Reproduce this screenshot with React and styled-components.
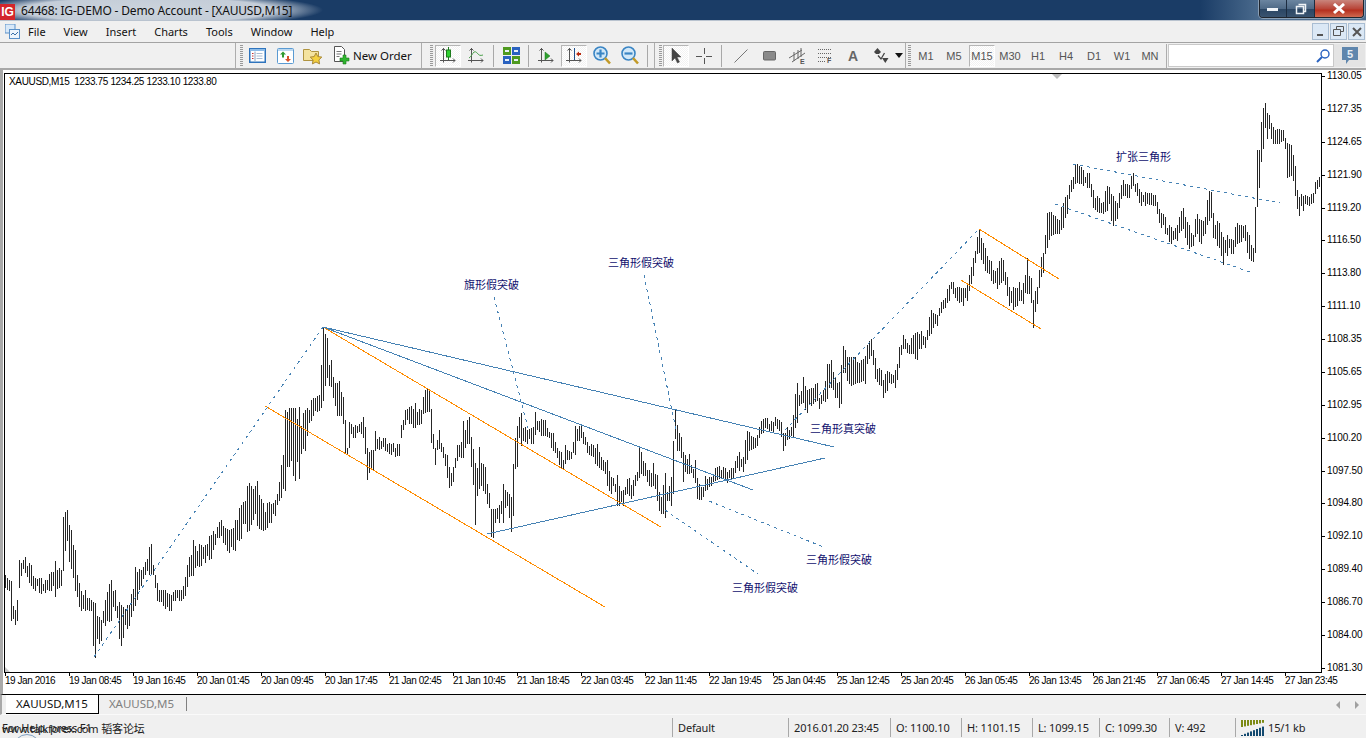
import React from "react";
import styled, { createGlobalStyle } from "styled-components";

// price bars read off the chart: x, high y, low y (page pixels)
const BAR_POINTS = [
  5,575,587, 8,580,590, 10,581,620, 12,606,618, 14,610,624, 17,600,620, 19,560,587, 21,563,575, 25,557,572, 30,565,585,
  33,576,588, 40,578,593, 45,580,592, 50,572,590, 55,561,596, 60,570,585, 63,517,570, 66,510,540, 70,530,568, 75,550,590,
  80,591,610, 85,590,610, 90,600,610, 94,603,657, 100,620,640, 105,600,625, 110,580,620, 115,590,610, 120,605,645, 128,605,625,
  135,567,605, 140,570,585, 150,544,573, 157,583,600, 165,590,608, 170,595,610, 175,590,600, 180,590,600, 185,577,595, 193,540,575,
  200,545,565, 210,535,558, 220,520,535, 228,530,552, 235,520,550, 240,505,538, 248,483,530, 257,481,525, 262,503,530, 267,503,527,
  275,500,515, 281,465,497, 285,410,490, 290,408,460, 294,408,480, 299,407,478, 305,410,450, 312,398,415, 318,395,410, 323,327,400,
  326,338,377, 329,365,385, 331,360,386, 333,377,397, 337,383,415, 339,381,415, 343,397,423, 345,420,453, 347,448,453, 349,422,447,
  351,424,433, 355,425,437, 359,424,431, 363,417,437, 365,427,453, 367,448,479, 369,452,472, 373,450,469, 375,431,450, 379,437,449,
  385,438,450, 390,444,454, 398,444,455, 400,425,437, 405,410,424, 410,406,423, 415,403,427, 420,410,423, 425,390,412, 428,389,411,
  431,409,442, 435,448,464, 439,430,448, 443,447,457, 447,455,477, 449,467,487, 453,467,481, 457,445,460, 461,442,457, 463,421,457,
  469,417,443, 471,437,466, 475,463,524, 479,447,488, 483,464,490, 485,467,493, 489,493,507, 491,509,536, 493,509,537, 495,509,522,
  499,505,522, 503,484,522, 507,492,505, 511,497,531, 513,464,515, 515,438,468, 517,426,466, 519,417,437, 521,413,445, 527,430,443,
  532,427,443, 535,412,434, 542,420,435, 545,420,435, 548,432,437, 552,433,450, 557,448,457, 560,452,468, 563,460,468, 565,445,463,
  570,452,458, 575,426,454, 580,426,437, 583,432,443, 587,442,452, 592,445,456, 597,444,465, 602,460,470, 607,460,485, 610,477,493,
  613,478,485, 617,475,505, 619,486,505, 623,490,505, 629,478,495, 633,480,495, 636,472,480, 639,447,477, 645,463,475, 649,470,485,
  651,473,486, 653,463,485, 657,475,500, 659,492,510, 661,497,513, 665,473,517, 667,492,500, 671,477,505, 673,441,493, 675,409,438,
  677,425,450, 679,433,450, 681,437,457, 683,452,481, 685,455,471, 689,454,473, 691,465,472, 695,460,482, 697,478,498, 700,487,499,
  705,476,490, 710,477,485, 715,468,480, 718,466,478, 725,468,480, 732,468,478, 735,461,472, 739,452,470, 743,457,471, 746,431,459,
  748,432,450, 752,437,448, 757,435,445, 758,427,437, 762,419,432, 767,418,428, 772,422,431, 775,417,425, 778,420,430, 782,423,438,
  783,433,450, 787,427,439, 791,427,435, 793,415,436, 796,383,422, 799,395,405, 803,377,402, 806,390,412, 812,388,403, 816,383,400,
  819,398,408, 823,390,400, 827,364,398, 831,360,387, 835,378,397, 839,382,407, 841,365,403, 843,346,372, 847,357,380, 850,357,385,
  854,357,383, 858,363,382, 862,359,380, 865,356,383, 867,345,363, 870,339,355, 875,358,378, 880,370,385, 883,380,397, 886,371,390,
  892,375,382, 895,370,387, 899,347,367, 903,335,348, 908,345,353, 912,335,353, 916,332,359, 921,331,348, 925,337,347, 927,330,339,
  930,310,333, 933,313,327, 937,315,325, 941,302,312, 945,298,307, 948,285,300, 951,282,288, 953,282,293, 955,288,297, 958,287,302,
  963,288,305, 967,283,300, 969,275,290, 971,267,283, 973,258,275, 977,237,253, 979,229,252, 982,243,263, 985,248,270, 988,260,273,
  991,261,280, 993,270,283, 997,268,288, 1000,258,282, 1003,260,280, 1007,277,295, 1009,287,305, 1013,287,309, 1016,288,305, 1019,282,300,
  1023,283,303, 1027,258,293, 1031,278,302, 1033,300,327, 1036,287,303, 1038,270,287, 1042,253,272, 1045,235,253, 1047,213,247, 1050,212,235,
  1054,216,233, 1058,220,233, 1062,203,227, 1066,195,213, 1069,185,198, 1072,177,188, 1074,164,183, 1077,164,182, 1080,167,183, 1083,170,185,
  1087,173,187, 1089,173,187, 1093,190,207, 1098,198,212, 1103,202,213, 1106,186,210, 1108,187,203, 1112,196,225, 1116,203,218, 1118,193,207,
  1123,180,195, 1128,185,197, 1132,173,185, 1137,183,195, 1140,192,205, 1145,192,205, 1150,193,204, 1154,195,205, 1157,202,213, 1160,213,227,
  1165,217,233, 1170,227,243, 1177,225,240, 1182,208,228, 1185,217,237, 1188,225,248, 1192,235,245, 1196,214,233, 1200,220,243, 1205,217,233,
  1208,191,220, 1210,192,217, 1213,213,237, 1218,223,247, 1223,237,264, 1227,235,255, 1232,240,253, 1236,223,243, 1240,225,241, 1245,225,240,
  1248,235,258, 1252,248,261, 1254,237,253, 1255,207,252, 1257,150,206, 1259,150,187, 1262,108,148, 1264,103,127, 1267,113,138, 1269,115,128,
  1272,127,143, 1274,130,143, 1278,129,143, 1282,130,140, 1285,138,148, 1287,143,177, 1290,145,175, 1293,155,180, 1296,172,202, 1297,190,208,
  1299,197,215, 1303,196,210, 1305,195,203, 1308,197,205, 1312,193,202, 1315,182,193, 1317,180,188, 1320,175,185,
];

// small seeded generator so the bars come out the same each time
const makeBarsPath = () => {
  let seed = 4711;
  const rnd = () => {
    seed = (seed * 16807) % 2147483647;
    return seed / 2147483647;
  };
  let d = "";
  let k = 0;
  for (let x = 5; x <= 1320; x += 2) {
    while (BAR_POINTS[(k + 1) * 3] !== undefined && BAR_POINTS[(k + 1) * 3] <= x) k++;
    const x0 = BAR_POINTS[k * 3];
    const x1 = BAR_POINTS[(k + 1) * 3] ?? x0 + 1;
    const t = (x - x0) / (x1 - x0);
    let hi = BAR_POINTS[k * 3 + 1] + (BAR_POINTS[k * 3 + 4] - BAR_POINTS[k * 3 + 1] || 0) * t;
    let lo = BAR_POINTS[k * 3 + 2] + (BAR_POINTS[k * 3 + 5] - BAR_POINTS[k * 3 + 2] || 0) * t;
    if (x - x0 <= 1) {
      // a bar next to a read-off point takes that point as it is
      hi = BAR_POINTS[k * 3 + 1];
      lo = BAR_POINTS[k * 3 + 2];
    } else if (x1 - x > 1) {
      // the ones between get shorter and uneven, as real ones are
      const range = lo - hi;
      const shift = (rnd() - 0.5) * Math.min(range, 14) * 0.5;
      hi += rnd() * 0.32 * range + shift;
      lo += -rnd() * 0.32 * range + shift;
    }
    d += `M${x + 0.5} ${Math.round(hi)}V${Math.round(lo + 1)}`;
  }
  return d;
};

const BARS_PATH = makeBarsPath();

const PRICES = [
  "1130.05", "1127.35", "1124.65", "1121.90", "1119.20", "1116.50", "1113.80", "1111.10", "1108.35", "1105.65",
  "1102.95", "1100.20", "1097.50", "1094.80", "1092.10", "1089.40", "1086.70", "1084.00", "1081.30",
];

const TIMES = [
  "19 Jan 2016", "19 Jan 08:45", "19 Jan 16:45", "20 Jan 01:45", "20 Jan 09:45", "20 Jan 17:45", "21 Jan 02:45",
  "21 Jan 10:45", "21 Jan 18:45", "22 Jan 03:45", "22 Jan 11:45", "22 Jan 19:45", "25 Jan 04:45", "25 Jan 12:45",
  "25 Jan 20:45", "26 Jan 05:45", "26 Jan 13:45", "26 Jan 21:45", "27 Jan 06:45", "27 Jan 14:45", "27 Jan 23:45",
];

const SOLID_BLUE = [
  [323, 327, 834, 447],
  [323, 327, 753, 490],
  [487, 534, 825, 458],
];
const ORANGE = [
  [323, 327, 661, 527],
  [265, 406, 605, 607],
  [979, 229, 1059, 279],
  [961, 280, 1041, 329],
];
const DASHED = [
  [94, 657, 323, 327],
  [785, 430, 979, 229],
  [494, 297, 528, 428],
  [644, 275, 676, 430],
  [709, 501, 826, 548],
  [665, 510, 758, 574],
  [1073, 164, 1280, 203],
  [1055, 204, 1250, 272],
];
const NOTES = [
  { x: 464, y: 289, text: "旗形假突破" },
  { x: 608, y: 267, text: "三角形假突破" },
  { x: 810, y: 433, text: "三角形真突破" },
  { x: 806, y: 564, text: "三角形假突破" },
  { x: 732, y: 592, text: "三角形假突破" },
  { x: 1116, y: 161, text: "扩张三角形" },
];

const GlobalStyle = createGlobalStyle`
  html, body {
    margin: 0;
    padding: 0;
    background: #f0f0f0;
    overflow: hidden;
  }
`;

const Page = styled.div`
  width: 1366px;
  height: 738px;
  display: flex;
  flex-direction: column;
  overflow: hidden;
  font-family: "Noto Sans", "Noto Sans CJK SC", sans-serif;
  color: #000;
`;

const TitleBar = styled.div`
  flex: 0 0 21px;
  min-height: 0;
  box-sizing: border-box;
  display: flex;
  align-items: flex-start;
  border-bottom: 1px solid #b9c3cf;
  background:
    radial-gradient(ellipse 175px 17px at 148px 10px, #ccd4dd 0, #c4cdd8 72%, rgba(196, 205, 216, 0) 100%),
    linear-gradient(90deg, rgba(26, 60, 102, 0) 1200px, #4d6d8f 1262px),
    #1a3c66;
`;

const AppLogo = styled.div`
  width: 15px;
  height: 16px;
  margin-top: 4px;
  background: #d3262c;
  color: #fff;
  font: bold 12px/16px "Liberation Sans", sans-serif;
  text-align: center;
`;

const TitleText = styled.div`
  margin-left: 6px;
  height: 20px;
  font-size: 12px;
  line-height: 22px;
  letter-spacing: -0.17px;
  color: #111;
  white-space: nowrap;
`;

const CaptionButtons = styled.div`
  margin-left: auto;
  margin-right: 2px;
  display: flex;
  height: 17px;
  border: 1px solid #20262e;
  border-top: 0;
  border-radius: 0 0 4px 4px;
  box-shadow: 0 0 0 1px rgba(255, 255, 255, 0.35);
  overflow: hidden;
`;

const CaptionButton = styled.div`
  width: ${(p) => p.$w}px;
  display: flex;
  align-items: center;
  justify-content: center;
  border-left: ${(p) => (p.$first ? "0" : "1px solid #1c2c40")};
  background: ${(p) =>
    p.$close
      ? "linear-gradient(#c9857c 0, #b9473a 50%, #b5301f 60%, #cf6a50 100%)"
      : "linear-gradient(#6b85a0 0, #4f6a87 50%, #2b4664 55%, #39536f 100%)"};
`;

const MenuBar = styled.div`
  flex: 0 0 22px;
  box-sizing: border-box;
  display: flex;
  align-items: center;
  background: #f0f0f0;
  border-bottom: 1px solid #a3a3a3;
  padding-left: 5px;
`;

const MenuItem = styled.div`
  font-size: 11px;
  margin-left: ${(p) => p.$gap}px;
  color: #111;
`;

const MdiButtons = styled.div`
  margin-left: auto;
  margin-right: 1px;
  display: flex;
  gap: 1px;
`;

const MdiButton = styled.div`
  width: 17px;
  height: 17px;
  box-sizing: border-box;
  border: 1px solid #a9bdd2;
  background: #dbe8f5;
  display: flex;
  align-items: center;
  justify-content: center;
`;

const ToolRow = styled.div`
  flex: 0 0 27px;
  box-sizing: border-box;
  display: flex;
  background: #f0f0f0;
  border-bottom: 2px solid #a8a8a8;
  padding-left: 235px;
`;

const ToolGroup = styled.div`
  display: flex;
  align-items: center;
  width: ${(p) => p.$w}px;
  box-sizing: border-box;
  border-left: 1px solid #adadad;
  padding-left: ${(p) => p.$pad}px;
`;

const Grip = styled.div`
  width: 3px;
  height: 21px;
  margin-right: ${(p) => p.$after}px;
  background: repeating-linear-gradient(#9a9a9a 0 1px, #f0f0f0 1px 2px);
`;

const ToolButton = styled.div`
  flex: 0 0 ${(p) => p.$w || 28}px;
  height: 22px;
  box-sizing: border-box;
  display: flex;
  align-items: center;
  justify-content: center;
  font: 11px "Liberation Sans", sans-serif;
  color: #555;
  ${(p) =>
    p.$active &&
    `
    margin: 0 1px;
    flex-basis: ${(p.$w || 28) - 2}px;
    background: repeating-conic-gradient(#fff 0 25%, #f2f2f2 0 50%) 0 0 / 2px 2px;
    border: 1px solid #fff;
    border-top-color: #b5b5b5;
    border-left-color: #b5b5b5;
  `}
`;

const OrderButton = styled(ToolButton)`
  justify-content: flex-start;
  gap: 3px;
  padding-left: 6px;
  font: 11.5px "Noto Sans", sans-serif;
  color: #111;
`;

const TextTool = styled(ToolButton)`
  font-size: 14px;
  font-weight: bold;
  color: #666;
`;

const ToolSep = styled.div`
  width: 1px;
  height: 22px;
  margin: 0 ${(p) => p.$r ?? 3}px 0 3px;
  background: #a8a8a8;
`;

const GroupEnd = styled.div`
  width: 1px;
  height: 24px;
  align-self: center;
  background: #adadad;
`;

const SearchBox = styled.div`
  width: 166px;
  height: 23px;
  margin-left: 1px;
  align-self: center;
  box-sizing: border-box;
  background: #fff;
  border: 1px solid #c9c9c9;
  display: flex;
  align-items: center;
  justify-content: flex-end;
  padding-right: 3px;
`;

const MailButton = styled.div`
  width: 31px;
  height: 23px;
  align-self: center;
  background: #e4e4e4;
  display: flex;
  align-items: center;
  justify-content: center;
`;

const ChartWindow = styled.div`
  flex: 0 0 625px;
  box-sizing: border-box;
  background: #fff;
  border-left: 3px solid #a9a9a9;
  border-bottom: 1px solid #000;
`;

const ChartBody = styled.div`
  display: flex;
  height: 603px;
`;

const PlotFrame = styled.div`
  position: relative;
  width: 1318px;
  height: 600px;
  box-sizing: border-box;
  margin: 3px 0 0 1px;
  border: 1px solid #000;
  flex: none;
`;

const PlotSvg = styled.svg`
  display: block;
  width: 1316px;
  height: 598px;
`;

const SymbolLine = styled.div`
  position: absolute;
  left: 4px;
  top: 1px;
  font: 10px/13px "Liberation Sans", sans-serif;
  letter-spacing: -0.35px;
  white-space: pre;
`;

const ShiftMark = styled.div`
  position: absolute;
  left: 1047px;
  top: 0;
  width: 0;
  height: 0;
  border: 5px solid transparent;
  border-top: 5px solid #bcbcbc;
`;

const CornerMark = styled.div`
  position: absolute;
  left: 0;
  bottom: 0;
  width: 0;
  height: 0;
  border-left: 5px solid #c8c8c8;
  border-top: 5px solid transparent;
`;

const PriceAxis = styled.div`
  display: flex;
  flex-direction: column;
  justify-content: space-between;
  height: 604px;
  width: 44px;
`;

const PriceLabel = styled.div`
  position: relative;
  height: 12px;
  padding-left: 5px;
  font: 10px/12px "Liberation Sans", sans-serif;
  letter-spacing: -0.1px;
  &::before {
    content: "";
    position: absolute;
    left: 0;
    top: 6px;
    width: 3px;
    height: 1px;
    background: #000;
  }
`;

const TimeAxis = styled.div`
  display: grid;
  grid-template-columns: repeat(21, 64px);
  padding-left: 2px;
  height: 21px;
`;

const TimeLabel = styled.div`
  position: relative;
  padding-top: 2px;
  font: 10px/12px "Liberation Sans", sans-serif;
  letter-spacing: -0.45px;
  white-space: nowrap;
  &::before {
    content: "";
    position: absolute;
    left: 0;
    top: 0;
    width: 1px;
    height: 3px;
    background: #000;
  }
`;

const TabBar = styled.div`
  flex: 0 0 20px;
  box-sizing: border-box;
  display: flex;
  align-items: stretch;
  background: #f0f0f0;
  padding-left: 6px;
  border-left: 2px solid #a9a9a9;
  border-bottom: 1px solid #fafafa;
`;

const Tab = styled.div`
  font-size: 11.5px;
  line-height: 18px;
  height: 19px;
  box-sizing: border-box;
  text-align: center;
  width: ${(p) => p.$w}px;
  margin-left: -2px;
  color: ${(p) => (p.$active ? "#111" : "#808080")};
  background: ${(p) => (p.$active ? "#fff" : "transparent")};
  border-right: ${(p) => (p.$active ? "1px solid #000" : "0")};
  border-bottom: ${(p) => (p.$active ? "1px solid #000" : "0")};
`;

const TabSep = styled.div`
  width: 1px;
  height: 14px;
  margin-top: 2px;
  background: #808080;
`;

const TabArrows = styled.div`
  margin-left: auto;
  margin-right: 7px;
  display: flex;
  align-items: center;
  gap: 15px;
`;

const StatusBar = styled.div`
  position: relative;
  flex: 1;
  display: flex;
  align-items: center;
  box-sizing: border-box;
  padding-top: 2px;
  background: #f0f0f0;
  font-size: 11px;
  letter-spacing: -0.15px;
  color: #222;
`;

const HelpText = styled.div`
  flex: 0 0 672px;
  position: relative;
  height: 100%;
  overflow: hidden;
`;

const HelpLine = styled.span`
  position: absolute;
  left: 2px;
  top: 3px;
  white-space: nowrap;
`;

const WatermarkArc = styled.div`
  position: absolute;
  left: 13px;
  top: 17px;
  width: 28px;
  height: 28px;
  box-sizing: border-box;
  border: 1px solid #7f9fc0;
  border-radius: 50%;
`;

const StatusCell = styled.div`
  flex: 0 0 ${(p) => p.$w}px;
  box-sizing: border-box;
  height: 19px;
  line-height: 19px;
  border-left: 1px solid #a8a8a8;
  padding-left: ${(p) => p.$pad || 5}px;
  white-space: nowrap;
  display: flex;
  align-items: center;
  gap: 3px;
`;

// axes shared by the chart-type toolbar icons
const Axes = () => (
  <path d="M5.5 2V16.5M2 14.5H17M3.5 4.5l2-2 2 2M15 12.5l2 2-2 2" fill="none" stroke="#555" />
);

const Icon = ({ w = 20, h = 20, children }) => (
  <svg width={w} height={h} viewBox={`0 0 ${w} ${h}`} shapeRendering="geometricPrecision">
    {children}
  </svg>
);

const ListIcon = () => (
  <Icon w={17} h={15}>
    <rect x=".75" y=".75" width="15.5" height="13.5" fill="#fff" stroke="#2f74bd" strokeWidth="1.5" />
    <rect x="1" y="1" width="15" height="2" fill="#8dbce8" />
    <path d="M3 5.5h1.5M3 8h1.5M3 10.5h1.5" stroke="#c03030" />
    <path d="M6 3.5V13" stroke="#8aa5c2" />
    <path d="M7.5 5.5h6M7.5 8h6M7.5 10.5h6" stroke="#a8bcd2" />
  </Icon>
);

const UpDownIcon = () => (
  <Icon w={17} h={16}>
    <rect x=".5" y=".5" width="16" height="15" rx="1" fill="#fff" stroke="#5a9ad2" />
    <rect x="1" y="1" width="15" height="2" fill="#bcd8f0" />
    <path d="M6 3.5l3 3H7v3H5v-3H3z" fill="#2f9a2f" />
    <path d="M11 14l3-3h-2V8h-2v3H8z" fill="#d8522a" />
  </Icon>
);

const FolderIcon = () => (
  <Icon w={20} h={18}>
    <path d="M.5 2.5h6l2 2h7v9H.5z" fill="#f4e3a0" stroke="#b09440" />
    <path d="M13 6l1.8 3.6 4 .5-2.9 2.8.7 4-3.6-1.9-3.6 1.9.7-4L7.2 10.1l4-.5z" fill="#f4d03f" stroke="#a8883a" />
  </Icon>
);

const OrderIcon = () => (
  <Icon w={17} h={19}>
    <path d="M1.5.5h7l3 3v12h-10z" fill="#fff" stroke="#555" />
    <path d="M3.5 5.5h5M3.5 8h5M3.5 10.5h3" stroke="#777" />
    <path d="M9 7h3v3h3v3h-3v3H9v-3H6v-3h3z" fill="#2fb52f" stroke="#1c7a1c" strokeWidth=".6" transform="translate(1 2)" />
  </Icon>
);

const CandleIcon = () => (
  <Icon>
    <Axes />
    <path d="M10.5 1V4M10.5 11V14" stroke="#1c7a1c" />
    <rect x="8.5" y="4" width="4" height="7" fill="#2fd02f" stroke="#1c7a1c" />
  </Icon>
);

const CurveIcon = () => (
  <Icon>
    <Axes />
    <path d="M3 12c2-1 3-4 5-6 2-1 3 1 4 2s2 2 5 1" fill="none" stroke="#4aa04a" />
  </Icon>
);

const TilesIcon = () => (
  <Icon w={17} h={17}>
    <rect x="0" y="0" width="8" height="8" fill="#4f9a20" />
    <rect x="9" y="0" width="8" height="8" fill="#2a62c0" />
    <rect x="0" y="9" width="8" height="8" fill="#2a62c0" />
    <rect x="9" y="9" width="8" height="8" fill="#4f9a20" />
    <path d="M2 3h4v2H2zM11 3h4v2h-4zM2 12h4v2H2zM11 12h4v2h-4z" fill="#e8f0f8" />
  </Icon>
);

const AutoScrollIcon = () => (
  <Icon>
    <Axes />
    <path d="M9 6l5 4-5 4z" fill="#2fa02f" stroke="#1c7a1c" strokeWidth=".5" />
  </Icon>
);

const ShiftIcon = () => (
  <Icon>
    <Axes />
    <path d="M10.5 2V14" stroke="#1f4f8c" />
    <path d="M12 8l3-2.5V7h2v2h-2v1.5z" fill="#b82a10" />
  </Icon>
);

const ZoomIcon = ({ plus }) => (
  <Icon w={18} h={19}>
    <circle cx="7.5" cy="7.5" r="6.5" fill="#d2e8f8" stroke="#3a85c4" strokeWidth="1.6" />
    <path d="M12 12l5 5.5" stroke="#c29a28" strokeWidth="2.6" />
    <path d={plus ? "M3.5 7.5h8M7.5 3.5v8" : "M3.5 7.5h8"} stroke="#3a85c4" strokeWidth="2.2" />
  </Icon>
);

const ArrowIcon = () => (
  <Icon w={12} h={17}>
    <path d="M2 1v13l3-3 2.5 5 2-1-2.5-5h4z" fill="#444" stroke="#444" strokeWidth=".5" />
  </Icon>
);

const CrossIcon = () => (
  <Icon w={16} h={16}>
    <path d="M0 8.5h6M10 8.5h6M8.5 0v6M8.5 10v6" stroke="#555" />
  </Icon>
);

const SlashIcon = () => (
  <Icon w={14} h={14}>
    <path d="M.5 13.5l13-13" stroke="#777" />
  </Icon>
);

const RectIcon = () => (
  <Icon w={13} h={10}>
    <rect x=".5" y=".5" width="12" height="8.5" rx="1" fill="#8a8a8a" stroke="#666" />
  </Icon>
);

const ChannelIcon = () => (
  <Icon w={17} h={17}>
    <path d="M0 11l13-8M3 15l13-9M5 14V5M9 12V3M12 10V1" stroke="#666" fill="none" />
    <text x="11" y="16.5" fontSize="7" fontWeight="bold" fontFamily="Liberation Sans" fill="#555">E</text>
  </Icon>
);

const FiboIcon = () => (
  <Icon w={15} h={15}>
    <path d="M0 1.5h13M0 5.5h13M0 9.5h13M0 13.5h8" stroke="#666" strokeDasharray="1 1" />
    <text x="9" y="15" fontSize="7" fontWeight="bold" fontFamily="Liberation Sans" fill="#555">F</text>
  </Icon>
);

const DrawArrowsIcon = () => (
  <Icon w={15} h={16}>
    <path d="M0 4l3.5-4L7 4l-2 2H2zM8 10h6.5l-3.2 5z" fill="#444" />
    <path d="M4 7.5l3 3.5 3.5-6" fill="none" stroke="#444" strokeWidth="1.3" />
  </Icon>
);

const MagnifierIcon = () => (
  <Icon w={14} h={14}>
    <circle cx="9" cy="5" r="4" fill="#fff" stroke="#2a62c0" strokeWidth="1.4" />
    <path d="M6 8l-5 5" stroke="#2a62c0" strokeWidth="2" />
  </Icon>
);

const MailIcon = () => (
  <Icon w={18} h={18}>
    <path d="M1 0h16v13H8l-3 4v-4H1z" fill="#5f86ad" />
    <text x="6" y="11" fontSize="11" fontWeight="bold" fontFamily="Liberation Sans" fill="#e8eef4">5</text>
  </Icon>
);

const NetBarsIcon = () => (
  <Icon w={24} h={16}>
    {Array.from({ length: 8 }, (_, i) => (
      <g key={i}>
        <rect x={i * 3} y={0} width="2" height={7 - i * 0.6} fill="#7c8a14" />
        <rect x={i * 3} y={15 - i * 1.2} width="2" height={1 + i * 1.2} fill="#134a70" />
      </g>
    ))}
  </Icon>
);

const ChartIconSmall = () => (
  <Icon w={15} h={15}>
    <rect x="0" y="0" width="10" height="9" fill="#d8e8f8" stroke="#5a90c8" />
    <rect x="4.5" y="5.5" width="10" height="9" fill="#eef5fc" stroke="#5a90c8" />
    <path d="M6 11l2-2 2 2 3-3" fill="none" stroke="#3a70a8" />
  </Icon>
);

const App = () => {
  return (
    <Page>
      <GlobalStyle />
      <TitleBar>
        <AppLogo>IG</AppLogo>
        <TitleText>64468: IG-DEMO - Demo Account - [XAUUSD,M15]</TitleText>
        <CaptionButtons>
          <CaptionButton $w={26} $first>
            <svg width="12" height="4"><rect width="11" height="3" y="1" fill="#f0f4f8" /></svg>
          </CaptionButton>
          <CaptionButton $w={27}>
            <svg width="12" height="12"><path d="M3.5 1.5h7v7h-2M1.5 3.5h7v7h-7z" fill="none" stroke="#eef2f6" strokeWidth="1.5" /></svg>
          </CaptionButton>
          <CaptionButton $w={48} $close>
            <svg width="14" height="12"><path d="M2 1l10 9M12 1L2 10" stroke="#fff" strokeWidth="3" /></svg>
          </CaptionButton>
        </CaptionButtons>
      </TitleBar>

      <MenuBar>
        <ChartIconSmall />
        <MenuItem $gap={8}>File</MenuItem>
        <MenuItem $gap={18}>View</MenuItem>
        <MenuItem $gap={18}>Insert</MenuItem>
        <MenuItem $gap={18}>Charts</MenuItem>
        <MenuItem $gap={18}>Tools</MenuItem>
        <MenuItem $gap={18}>Window</MenuItem>
        <MenuItem $gap={18}>Help</MenuItem>
        <MdiButtons>
          <MdiButton>
            <svg width="9" height="9"><path d="M1 8h6" stroke="#555" strokeWidth="2" /></svg>
          </MdiButton>
          <MdiButton>
            <svg width="11" height="11"><path d="M3.5 3V.5h7v5H8M.5 3.5h7v6h-7z" fill="none" stroke="#555" /></svg>
          </MdiButton>
          <MdiButton>
            <svg width="10" height="10"><path d="M1 1l8 8M9 1l-8 8" stroke="#555" strokeWidth="2" /></svg>
          </MdiButton>
        </MdiButtons>
      </MenuBar>

      <ToolRow>
        <ToolGroup $w={186} $pad={4}>
          <Grip $after={0} />
          <ToolButton><ListIcon /></ToolButton>
          <ToolButton><UpDownIcon /></ToolButton>
          <ToolButton><FolderIcon /></ToolButton>
          <OrderButton $w={92}><OrderIcon />New Order</OrderButton>
        </ToolGroup>
        <ToolGroup $w={233} $pad={8}>
          <Grip $after={1} />
          <ToolButton $active><CandleIcon /></ToolButton>
          <ToolButton><CurveIcon /></ToolButton>
          <ToolSep />
          <ToolButton><TilesIcon /></ToolButton>
          <ToolSep />
          <ToolButton><AutoScrollIcon /></ToolButton>
          <ToolButton $active><ShiftIcon /></ToolButton>
          <ToolButton><ZoomIcon plus /></ToolButton>
          <ToolButton><ZoomIcon /></ToolButton>
          <ToolSep />
        </ToolGroup>
        <ToolGroup $w={251} $pad={4}>
          <Grip $after={0} />
          <ToolButton $active><ArrowIcon /></ToolButton>
          <ToolButton><CrossIcon /></ToolButton>
          <ToolSep $r={5} />
          <ToolButton><SlashIcon /></ToolButton>
          <ToolButton><RectIcon /></ToolButton>
          <ToolButton><ChannelIcon /></ToolButton>
          <ToolButton><FiboIcon /></ToolButton>
          <TextTool>A</TextTool>
          <ToolButton><DrawArrowsIcon /></ToolButton>
          <svg width="8" height="5"><path d="M0 0h8L4 5z" fill="#111" /></svg>
        </ToolGroup>
        <ToolGroup $w={261} $pad={2}>
          <Grip $after={1} />
          {["M1", "M5", "M15", "M30", "H1", "H4", "D1", "W1", "MN"].map((tf) => (
            <ToolButton key={tf} $active={tf === "M15"}>{tf}</ToolButton>
          ))}
        </ToolGroup>
        <GroupEnd />
        <SearchBox><MagnifierIcon /></SearchBox>
        <MailButton><MailIcon /></MailButton>
      </ToolRow>

      <ChartWindow>
        <ChartBody>
          <PlotFrame>
            <PlotSvg viewBox="5 74 1316 598">
              <path d={BARS_PATH} stroke="#262626" strokeWidth="1" fill="none" shapeRendering="crispEdges" />
              {ORANGE.map(([x1, y1, x2, y2]) => (
                <line key={x1} x1={x1} y1={y1} x2={x2} y2={y2} stroke="#ff8c00" shapeRendering="crispEdges" />
              ))}
              {SOLID_BLUE.map(([x1, y1, x2, y2]) => (
                <line key={y2} x1={x1} y1={y1} x2={x2} y2={y2} stroke="#4682b4" shapeRendering="crispEdges" />
              ))}
              {DASHED.map(([x1, y1, x2, y2]) => (
                <line key={x1} x1={x1} y1={y1} x2={x2} y2={y2} stroke="#4682b4" strokeDasharray="3 4" shapeRendering="crispEdges" />
              ))}
              {NOTES.map((n) => (
                <text key={n.x} x={n.x} y={n.y} fontSize="11" fontFamily="'Noto Sans CJK SC', sans-serif" fill="#10106e">
                  {n.text}
                </text>
              ))}
            </PlotSvg>
            <SymbolLine>{"XAUUSD,M15  1233.75 1234.25 1233.10 1233.80"}</SymbolLine>
            <ShiftMark />
            <CornerMark />
          </PlotFrame>
          <PriceAxis>
            {PRICES.map((p) => (
              <PriceLabel key={p}>{p}</PriceLabel>
            ))}
          </PriceAxis>
        </ChartBody>
        <TimeAxis>
          {TIMES.map((t) => (
            <TimeLabel key={t}>{t}</TimeLabel>
          ))}
        </TimeAxis>
      </ChartWindow>

      <TabBar>
        <Tab $active $w={93}>XAUUSD,M15</Tab>
        <Tab $w={89}>XAUUSD,M5</Tab>
        <TabSep />
        <TabArrows>
          <svg width="4" height="8"><path d="M4 0v8L0 4z" fill="#a0a0a0" /></svg>
          <svg width="4" height="8"><path d="M0 0v8l4-4z" fill="#a0a0a0" /></svg>
        </TabArrows>
      </TabBar>

      <StatusBar>
        <HelpText>
          <HelpLine>For Help, press F1</HelpLine>
          <HelpLine>www.talkforex.com 韬客论坛</HelpLine>
          <WatermarkArc />
        </HelpText>
        <StatusCell $w={116}>Default</StatusCell>
        <StatusCell $w={102}>2016.01.20 23:45</StatusCell>
        <StatusCell $w={71}>O: 1100.10</StatusCell>
        <StatusCell $w={71}>H: 1101.15</StatusCell>
        <StatusCell $w={67}>L: 1099.15</StatusCell>
        <StatusCell $w={70}>C: 1099.30</StatusCell>
        <StatusCell $w={66}>V: 492</StatusCell>
        <StatusCell $w={130}><NetBarsIcon />15/1 kb</StatusCell>
      </StatusBar>
    </Page>
  );
};

export default App;
